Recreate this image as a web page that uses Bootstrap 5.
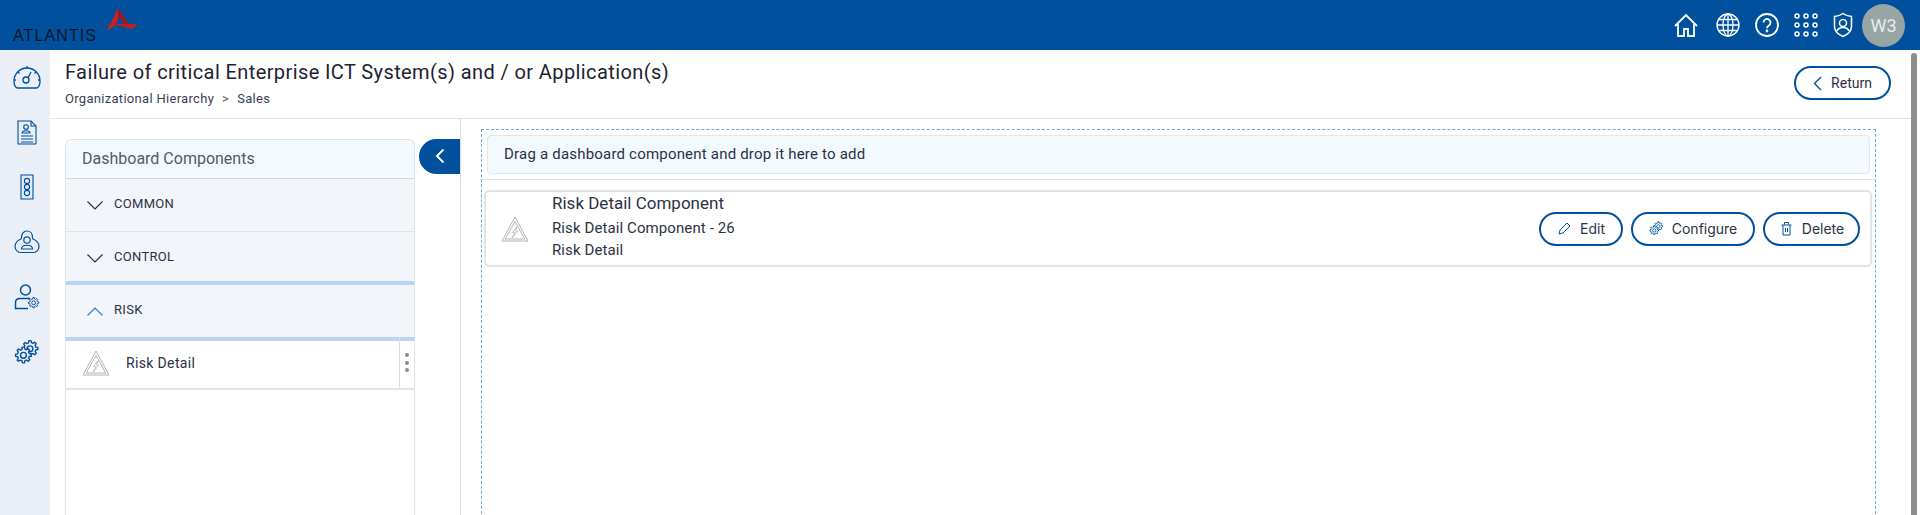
<!DOCTYPE html>
<html lang="en">
<head>
    <meta charset="UTF-8">
    <title>Dashboard Components</title>
    <link href="https://cdn.jsdelivr.net/npm/bootstrap@5.3.3/dist/css/bootstrap.min.css" rel="stylesheet">
    <style>
        html, body { height: 515px; overflow: hidden; }
        body { font-family: Roboto, "Liberation Sans", sans-serif; color: #2c3145; background: #fff; }
        .top-bar { height: 50px; background: #00509d; padding-right: 15px; }
        .logo-box { width: 150px; height: 50px; }
        .logo-text { font-family: "Liberation Sans", sans-serif; font-size: 16px; letter-spacing: 1.1px; fill: #0d1520; }
        .top-icons { gap: 15px; }
        .top-icons svg { width: 24px; height: 26px; }
        .top-icons .icon-home { margin-right: 3px; }
        .top-icons .icon-shield { width: 20px; margin-right: -6px; }
        .avatar { width: 43px; height: 43px; border-radius: 50%; background: #98a5a5; color: #e8ecec; font-size: 18px; }
        .page-body { height: 465px; }
        .side-rail { width: 50px; background: #eaeef7; padding: 13px 0 0 4px; gap: 27px; }
        .side-rail svg { width: 28px; height: 28px; }
        .main-area { min-width: 0; }
        .page-head { height: 69px; padding: 8px 20px 0 15px; border-bottom: 1px solid #e3e3e3; }
        .page-title { font-size: 20px; line-height: 28px; letter-spacing: .4px; color: #1d2233; font-weight: 400; margin: 0; }
        .crumbs { font-size: 13px; line-height: 18px; letter-spacing: .3px; margin-top: 4px; color: #3a3f52; }
        .crumbs span { margin: 0 8px; color: #555; }
        .btn-pill { border: 2px solid #00509d; border-radius: 18px; background: #fff; color: #2c3145; height: 34px; font-size: 14px; padding: 0; }
        .btn-return { width: 97px; margin-top: 8px; gap: 9px; }
        .work-row { height: 396px; }
        .left-col { width: 411px; padding: 20px 0 0 15px; border-right: 1px solid #dcdcdc; position: relative; }
        .comp-panel { width: 350px; height: 400px; border: 1px solid #e0e0e0; border-bottom: 0; border-radius: 6px 6px 0 0; }
        .panel-head { height: 39px; background: #f3faff; border-bottom: 1px solid #d5d8dd; padding-left: 16px; font-size: 16px; color: #555b66; border-radius: 6px 6px 0 0; }
        .acc-row { background: #f2f5fa; padding-left: 21px; font-size: 13px; letter-spacing: .3px; color: #2c3145; gap: 11px; }
        .acc-row svg { width: 16px; height: 9px; margin-top: 3px; }
        .row-common { height: 53px; padding-bottom: 3px; border-bottom: 1px solid #e3e3e3; }
        .row-control { height: 49px; }
        .row-risk { height: 60px; border-top: 4px solid #bad4f6; border-bottom: 4px solid #bad4f6; padding-bottom: 3px; }
        .comp-item { height: 49px; border-bottom: 2px solid #e3e3e3; }
        .comp-item-name { font-size: 14px; letter-spacing: .35px; padding-left: 16px; gap: 16px; margin-top: -3px; }
        .comp-item-name svg { width: 28px; height: 26px; }
        .drag-dots { width: 15px; border-left: 1px solid #dedede; margin-top: -4px; gap: 3.5px; }
        .drag-dots i { width: 4px; height: 4px; border-radius: 50%; background: #8b8b8b; }
        .toggle-tab { position: absolute; right: 0; top: 20px; width: 41px; height: 35px; background: #00509d; border-radius: 18px 0 0 18px; padding-bottom: 2px; }
        .right-col { padding: 10px 0 0 20px; min-width: 0; }
        .drop-zone { height: 400px; width: 1395px; border: 1px dashed #6ea6e6; padding-top: 5px; }
        .drop-hint { height: 39px; margin: 0 5px; background: #f3faff; border: 1px solid #e3e6ea; border-radius: 4px; padding-left: 16px; font-size: 15px; letter-spacing: .2px; }
        .drop-rule { height: 1px; background: #e3e3e3; margin-top: 5px; }
        .comp-card { height: 77px; margin: 10px 3px 0 2px; border: 2px solid #e3e3e3; border-radius: 5px; padding-right: 10px; }
        .comp-icon { width: 58px; margin-right: 8px; }
        .comp-icon svg { width: 28px; height: 26px; }
        .card-title-line { font-size: 17px; line-height: 20px; margin-top: -3px; }
        .card-sub-line { font-size: 15px; line-height: 22px; letter-spacing: .1px; }
        .card-actions { gap: 8px; font-family: Inter, Roboto, sans-serif; }
        .card-actions .btn-pill { gap: 8px; }
        .card-actions svg { width: 15px; height: 15px; }
        .btn-edit { width: 84px; }
        .btn-configure { width: 124px; }
        .btn-delete { width: 97px; }
        .scroll-track { width: 9px; padding-top: 3px; }
        .scroll-thumb { width: 6px; height: 100%; background: #8e8e8e; border-radius: 3px 3px 0 0; }
    </style>
</head>
<body>
<svg width="0" height="0" class="position-absolute">
    <defs>
        <g id="warn-sign" fill="none" stroke="#a9a9a9" stroke-width=".9" stroke-linejoin="round">
            <path d="M14 1 27 25H1Z"/>
            <path d="M14 5.500 23.800 23H4.200Z"/>
            <path d="M16.500 10 11.500 16.500h2.500L11 22l6-7h-2.500l2-5Z" stroke="#bcbcbc"/>
        </g>
        <g id="gear-one" stroke-linejoin="round">
            <path d="M8 1.500h2l.4 2 1.500.6 1.700-1.100 1.400 1.400-1.100 1.700.6 1.500 2 .4v2l-2 .4-.6 1.500 1.100 1.700-1.400 1.400-1.700-1.100-1.500.6-.4 2H8l-.4-2-1.500-.6-1.700 1.100L3 13.900 4.100 12.200l-.6-1.500-2-.4v-2l2-.4.6-1.500L3 4.700 4.400 3.300l1.700 1.100 1.500-.6Z"/>
            <circle cx="9" cy="9.300" r="2.800"/>
        </g>
    </defs>
</svg>

<header class="top-bar d-flex align-items-center">
    <div class="logo-box">
        <svg width="150" height="50" viewBox="0 0 150 50">
            <path d="M118 8 107 31 116 25 118.500 17Z" fill="#c8202a"/>
            <path d="M118 8 132 29 125 25 118.500 17Z" fill="#a5141c"/>
            <path d="M97 24 138 24 132 29 116 25Z" fill="#c01c24"/>
            <text x="13" y="41" class="logo-text">ATLANTIS</text>
        </svg>
    </div>
    <div class="top-icons d-flex align-items-center ms-auto">
        <svg class="icon-home" viewBox="0 0 24 26" fill="none" stroke="#fff" stroke-width="1.800"><path d="M1 14 12 3l11 11"/><path d="M4 12v12h6v-7h4v7h6V12"/></svg>
        <svg viewBox="0 0 24 26" fill="none" stroke="#fff" stroke-width="1.300"><circle cx="12" cy="13" r="11"/><ellipse cx="12" cy="13" rx="5" ry="11"/><path d="M12 2v22M1 13h22M3 7.500h18M3 18.500h18"/></svg>
        <svg viewBox="0 0 24 26" fill="none" stroke="#fff" stroke-width="1.800"><circle cx="12" cy="13" r="11"/><path d="M8.500 10.500a3.500 3.500 0 1 1 5.300 3c-1.200.7-1.800 1.300-1.800 2.700"/><circle cx="12" cy="19" r=".5"/></svg>
        <svg viewBox="0 0 24 26" fill="none" stroke="#fff" stroke-width="1.500"><circle cx="3" cy="4" r="2"/><circle cx="12" cy="4" r="2"/><circle cx="21" cy="4" r="2"/><circle cx="3" cy="13" r="2"/><circle cx="12" cy="13" r="2"/><circle cx="21" cy="13" r="2"/><circle cx="3" cy="22" r="2"/><circle cx="12" cy="22" r="2"/><circle cx="21" cy="22" r="2"/></svg>
        <svg class="icon-shield" viewBox="0 0 20 26" fill="none" stroke="#fff" stroke-width="1.500"><path d="M10 1.500c2.500 1.800 5 2.800 8.500 3v10c0 5-4 8-8.500 10-4.500-2-8.500-5-8.500-10v-10c3.500-.2 6-1.200 8.500-3Z"/><circle cx="10" cy="11" r="3.500"/><path d="M4 19c1-2.500 3.500-3.500 6-3.500s5 1 6 3.500"/></svg>
        <div class="avatar d-flex align-items-center justify-content-center">W3</div>
    </div>
</header>

<div class="page-body d-flex">
    <nav class="side-rail d-flex flex-column align-items-center flex-shrink-0">
        <svg viewBox="0 0 28 28" fill="none" stroke="#00509d" stroke-width="1.300"><path d="M4 25h20c2-1 3-4 3-7a13 13 0 0 0-26 0c0 3 1 6 3 7Z"/><circle cx="13" cy="17" r="3"/><path d="M15 15l3-6M14 5V3M5 9l1.500 1.500M23 9l-1.500 1.500M1 17h2M25 17h2"/></svg>
        <svg viewBox="0 0 28 28" fill="none" stroke="#00509d" stroke-width="1.100"><path d="M5 3h13l5 5v17a1 1 0 0 1-1 1H5Z"/><path d="M18 3v5h5"/><circle cx="13" cy="9" r="2.300"/><path d="M9 15c0-3 8-3 8 0ZM8 18h12M8 21h12M8 24h12"/></svg>
        <svg viewBox="0 0 28 28" fill="#dfeafb" stroke="#00509d" stroke-width="1.100"><path d="M8 2h12v24H8Z"/><circle cx="14" cy="8" r="2.600" fill="none"/><circle cx="14" cy="14" r="2.600" fill="none"/><circle cx="14" cy="20" r="2.600" fill="none"/></svg>
        <svg viewBox="0 0 28 28" fill="none" stroke="#00509d" stroke-width="1.200"><path d="M14 3c3.500 0 5.500 3 5.500 6.500 0 .8 0 1 .5 1.500 3.500 1.500 6 4 6 7.500 0 3.500-3 6-6 6H8c-3 0-6-2.500-6-6C2 15 4.500 12.500 8 11c.5-.5.5-.7.5-1.500C8.500 6 10.500 3 14 3Z"/><circle cx="14" cy="12" r="3.200"/><path d="M8.500 21c0-5 11-5 11 0Z"/></svg>
        <svg viewBox="0 0 28 28" fill="none" stroke="#00509d" stroke-width="1.500"><circle cx="12.500" cy="7" r="5"/><path d="M17 15.500H7c-3 0-4.500 2-4.500 4v6H15"/><g transform="translate(14.500 13.500) scale(.68)" stroke-width="1.400"><use href="#gear-one"/></g></svg>
        <svg viewBox="0 0 28 28" fill="none" stroke="#00509d" stroke-width="1.300"><g transform="translate(7.500 1) scale(1.050)"><use href="#gear-one"/></g><g transform="translate(1 7.500) scale(1.050)"><use href="#gear-one" fill="#eaeef7"/></g></svg>
    </nav>

    <div class="main-area flex-grow-1">
        <div class="page-head d-flex justify-content-between">
            <div>
                <h1 class="page-title">Failure of critical Enterprise ICT System(s) and / or Application(s)</h1>
                <div class="crumbs">Organizational Hierarchy<span>&gt;</span>Sales</div>
            </div>
            <button class="btn btn-pill btn-return d-flex align-items-center justify-content-center">
                <svg width="9" height="15" viewBox="0 0 9 15" fill="none" stroke="#00509d" stroke-width="1.400"><path d="M8 1 1.500 7.500 8 14"/></svg>
                Return
            </button>
        </div>

        <div class="work-row d-flex">
            <div class="left-col flex-shrink-0">
                <div class="comp-panel">
                    <div class="panel-head d-flex align-items-center">Dashboard Components</div>
                    <div class="acc-row row-common d-flex align-items-center">
                        <svg viewBox="0 0 16 9" fill="none" stroke="#2c3145" stroke-width="1.200"><path d="M.5 .5 8 8 15.500 .5"/></svg>COMMON
                    </div>
                    <div class="acc-row row-control d-flex align-items-center">
                        <svg viewBox="0 0 16 9" fill="none" stroke="#2c3145" stroke-width="1.200"><path d="M.5 .5 8 8 15.500 .5"/></svg>CONTROL
                    </div>
                    <div class="acc-row row-risk d-flex align-items-center">
                        <svg viewBox="0 0 16 9" fill="none" stroke="#2f7de1" stroke-width="1.200"><path d="M.5 8.500 8 1 15.500 8.500"/></svg>RISK
                    </div>
                    <div class="comp-item d-flex justify-content-between">
                        <div class="comp-item-name d-flex align-items-center">
                            <svg viewBox="0 0 28 26"><use href="#warn-sign"/></svg>Risk Detail
                        </div>
                        <div class="drag-dots d-flex flex-column align-items-center justify-content-center"><i></i><i></i><i></i></div>
                    </div>
                </div>
                <div class="toggle-tab d-flex align-items-center justify-content-center">
                    <svg width="10" height="16" viewBox="0 0 10 16" fill="none" stroke="#fff" stroke-width="2"><path d="M8.500 1.500 2 8l6.500 6.500"/></svg>
                </div>
            </div>
            <div class="right-col flex-grow-1">
                <div class="drop-zone">
                    <div class="drop-hint d-flex align-items-center">Drag a dashboard component and drop it here to add</div>
                    <div class="drop-rule"></div>
                    <div class="comp-card d-flex align-items-center">
                        <div class="comp-icon d-flex justify-content-center">
                            <svg viewBox="0 0 28 26"><use href="#warn-sign"/></svg>
                        </div>
                        <div>
                            <div class="card-title-line">Risk Detail Component</div>
                            <div class="card-sub-line mt-1">Risk Detail Component - 26</div>
                            <div class="card-sub-line">Risk Detail</div>
                        </div>
                        <div class="card-actions d-flex ms-auto">
                            <button class="btn btn-pill btn-edit d-flex align-items-center justify-content-center">
                                <svg viewBox="0 0 15 15" fill="none" stroke="#00509d"><path d="M2 13l1-4 7-7 3 3-7 7Z"/></svg>Edit
                            </button>
                            <button class="btn btn-pill btn-configure d-flex align-items-center justify-content-center">
                                <svg viewBox="0 0 22 22" fill="none" stroke="#00509d" stroke-width="1.500"><g transform="translate(6 0) scale(.85)"><use href="#gear-one"/></g><g transform="translate(0 6) scale(.85)"><use href="#gear-one" fill="#fff"/></g></svg>Configure
                            </button>
                            <button class="btn btn-pill btn-delete d-flex align-items-center justify-content-center">
                                <svg viewBox="0 0 15 15" fill="none" stroke="#00509d"><path d="M2.500 4h10M5.500 3.500v-2h4v2M4 4v10h7V4M6.500 7v4M8.500 7v4"/></svg>Delete
                            </button>
                        </div>
                    </div>
                </div>
            </div>
        </div>
    </div>
    <div class="scroll-track flex-shrink-0"><div class="scroll-thumb"></div></div>
</div>

<script src="https://cdn.jsdelivr.net/npm/bootstrap@5.3.3/dist/js/bootstrap.bundle.min.js"></script>
</body>
</html>
